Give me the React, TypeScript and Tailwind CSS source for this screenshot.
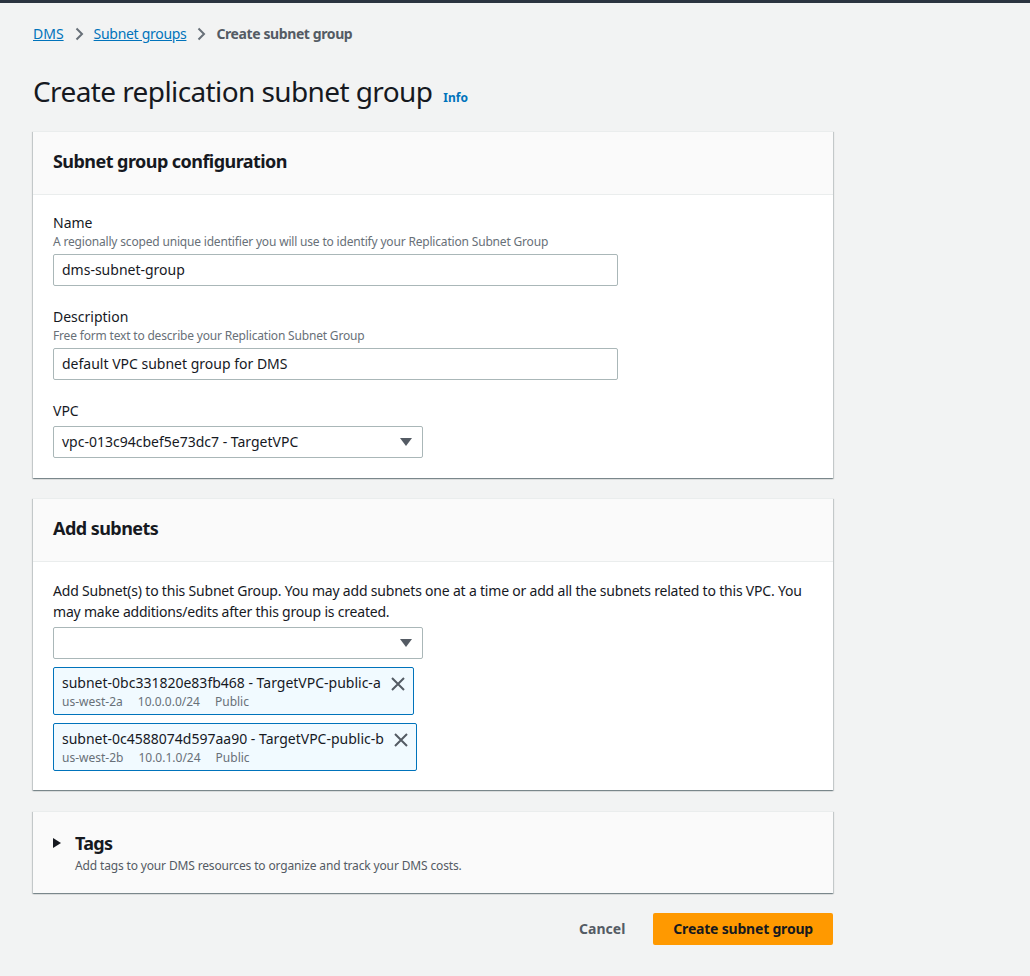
import React from 'react';

const font = { fontFamily: '"Noto Sans", "Open Sans", sans-serif' };

function Chevron()
{
    return (
        <svg width="10" height="14" viewBox="0 0 10 14" className="mx-[10px]">
            <path d="M2.5 1.5 L8 7 L2.5 12.5" fill="none" stroke="#687078" strokeWidth="2" />
        </svg>
    );
}

function Caret()
{
    return (
        <svg width="12" height="8" viewBox="0 0 12 8">
            <path d="M0 0 H12 L6 8 Z" fill="#545b64" />
        </svg>
    );
}

function Field({ label, hint, children }: { label: string; hint?: string; children: React.ReactNode })
{
    return (
        <div className="flex flex-col">
            <span className="text-sm leading-[22px] text-[#16191f]">{label}</span>
            {hint && <span className="text-xs leading-4 tracking-[-0.18px] text-[#687078]">{hint}</span>}
            <div className="mt-1">{children}</div>
        </div>
    );
}

function TextInput({ value }: { value: string })
{
    return (
        <div className="w-[565px] h-8 border border-[#aab7b8] rounded-[2px] bg-white px-[8px] flex items-center text-sm text-[#16191f]">
            {value}
        </div>
    );
}

function Select({ value }: { value: string })
{
    return (
        <div className="w-[370px] h-8 border border-[#aab7b8] rounded-[2px] bg-white pl-[8px] pr-[10px] flex items-center justify-between text-sm text-[#16191f]">
            <span>{value}</span>
            <Caret />
        </div>
    );
}

function Token({ name, az, cidr }: { name: string; az: string; cidr: string })
{
    return (
        <div className="inline-flex items-start self-start border border-[#0073bb] rounded-[2px] bg-[#f1faff] pl-[8px] pr-[7px] py-[4px]">
            <div className="flex flex-col">
                <span className="text-sm leading-[22px] text-[#16191f]">{name}</span>
                <div className="flex gap-[15px] text-xs leading-4 text-[#687078]">
                    <span>{az}</span>
                    <span>{cidr}</span>
                    <span>Public</span>
                </div>
            </div>
            <svg width="16" height="16" viewBox="0 0 16 16" className="ml-[9px] mt-[4px]">
                <path d="M2 2 L14 14 M14 2 L2 14" stroke="#545b64" strokeWidth="2" />
            </svg>
        </div>
    );
}

const cardShadow = 'shadow-[0_1px_1px_0_rgba(0,28,36,0.3),1px_1px_1px_0_rgba(0,28,36,0.15),-1px_1px_1px_0_rgba(0,28,36,0.15)] border-t border-[#eaeded]';

function Card({ title, bodyClass, children }: { title: string; bodyClass: string; children: React.ReactNode })
{
    return (
        <div className={'bg-white ' + cardShadow}>
            <div className="h-[63px] bg-[#fafafa] border-b border-[#eaeded] px-5 pb-[4px] flex items-center">
                <h2 className="text-lg font-bold tracking-[-0.55px] text-[#16191f]">{title}</h2>
            </div>
            <div className={'px-5 ' + bodyClass}>{children}</div>
        </div>
    );
}

export default function App()
{
    return (
        <div className="min-h-[976px] bg-[#f2f3f3]" style={font}>
            <div className="h-[3px] bg-[#2b3440]" />
            <div className="pl-[33px] w-[833px]">
                {/* breadcrumbs */}
                <nav className="flex items-center h-[22px] mt-[20px] text-sm">
                    <a className="text-[#0073bb] underline">DMS</a>
                    <Chevron />
                    <a className="text-[#0073bb] underline tracking-[-0.3px]">Subnet groups</a>
                    <Chevron />
                    <span className="font-bold tracking-[-0.4px] text-[#545b64]">Create subnet group</span>
                </nav>

                <div className="flex items-baseline mt-[28px] mb-[22px]">
                    <h1 className="text-[28px] leading-9 tracking-[-0.6px] text-[#16191f]">Create replication subnet group</h1>
                    <span className="ml-[11px] text-xs font-bold text-[#0073bb]">Info</span>
                </div>

                <div className="flex flex-col gap-5">
                    <Card title="Subnet group configuration" bodyClass="pt-[17px] pb-5">
                        <div className="flex flex-col gap-5">
                            <Field label="Name" hint="A regionally scoped unique identifier you will use to identify your Replication Subnet Group">
                                <TextInput value="dms-subnet-group" />
                            </Field>
                            <Field label="Description" hint="Free form text to describe your Replication Subnet Group">
                                <TextInput value="default VPC subnet group for DMS" />
                            </Field>
                            <Field label="VPC">
                                <Select value="vpc-013c94cbef5e73dc7 - TargetVPC" />
                            </Field>
                        </div>
                    </Card>

                    <Card title="Add subnets" bodyClass="pt-[18px] pb-[19px]">
                        <p className="text-sm leading-[21px] tracking-[-0.2px] text-[#16191f]">
                            Add Subnet(s) to this Subnet Group. You may add subnets one at a time or add all the subnets related to this VPC. You may make additions/edits after this group is created.
                        </p>
                        <div className="mt-[5px]">
                            <Select value="" />
                        </div>
                        <div className="flex flex-col gap-2 mt-[8px]">
                            <Token name="subnet-0bc331820e83fb468 - TargetVPC-public-a" az="us-west-2a" cidr="10.0.0.0/24" />
                            <Token name="subnet-0c4588074d597aa90 - TargetVPC-public-b" az="us-west-2b" cidr="10.0.1.0/24" />
                        </div>
                    </Card>

                    <div className={'mt-[1px] bg-[#fafafa] h-[82px] pl-5 pt-[19px] ' + cardShadow}>
                        <div className="flex items-center">
                            <svg width="8" height="10" viewBox="0 0 8 10" className="mr-[14px]">
                                <path d="M0 0 L8 5 L0 10 Z" fill="#16191f" />
                            </svg>
                            <span className="text-lg font-bold leading-6 tracking-[-0.7px] text-[#16191f]">Tags</span>
                        </div>
                        <p className="ml-[22px] mt-[3px] text-xs leading-4 tracking-[-0.15px] text-[#545b64]">Add tags to your DMS resources to organize and track your DMS costs.</p>
                    </div>
                </div>

                <div className="flex justify-end items-center mt-5 gap-[8px]">
                    <button className="px-5 h-8 text-sm font-bold text-[#545b64]">Cancel</button>
                    <button className="h-8 px-5 rounded-[2px] bg-[#ff9900] text-sm font-bold tracking-[-0.2px] text-[#16191f]">Create subnet group</button>
                </div>
            </div>
        </div>
    );
}
